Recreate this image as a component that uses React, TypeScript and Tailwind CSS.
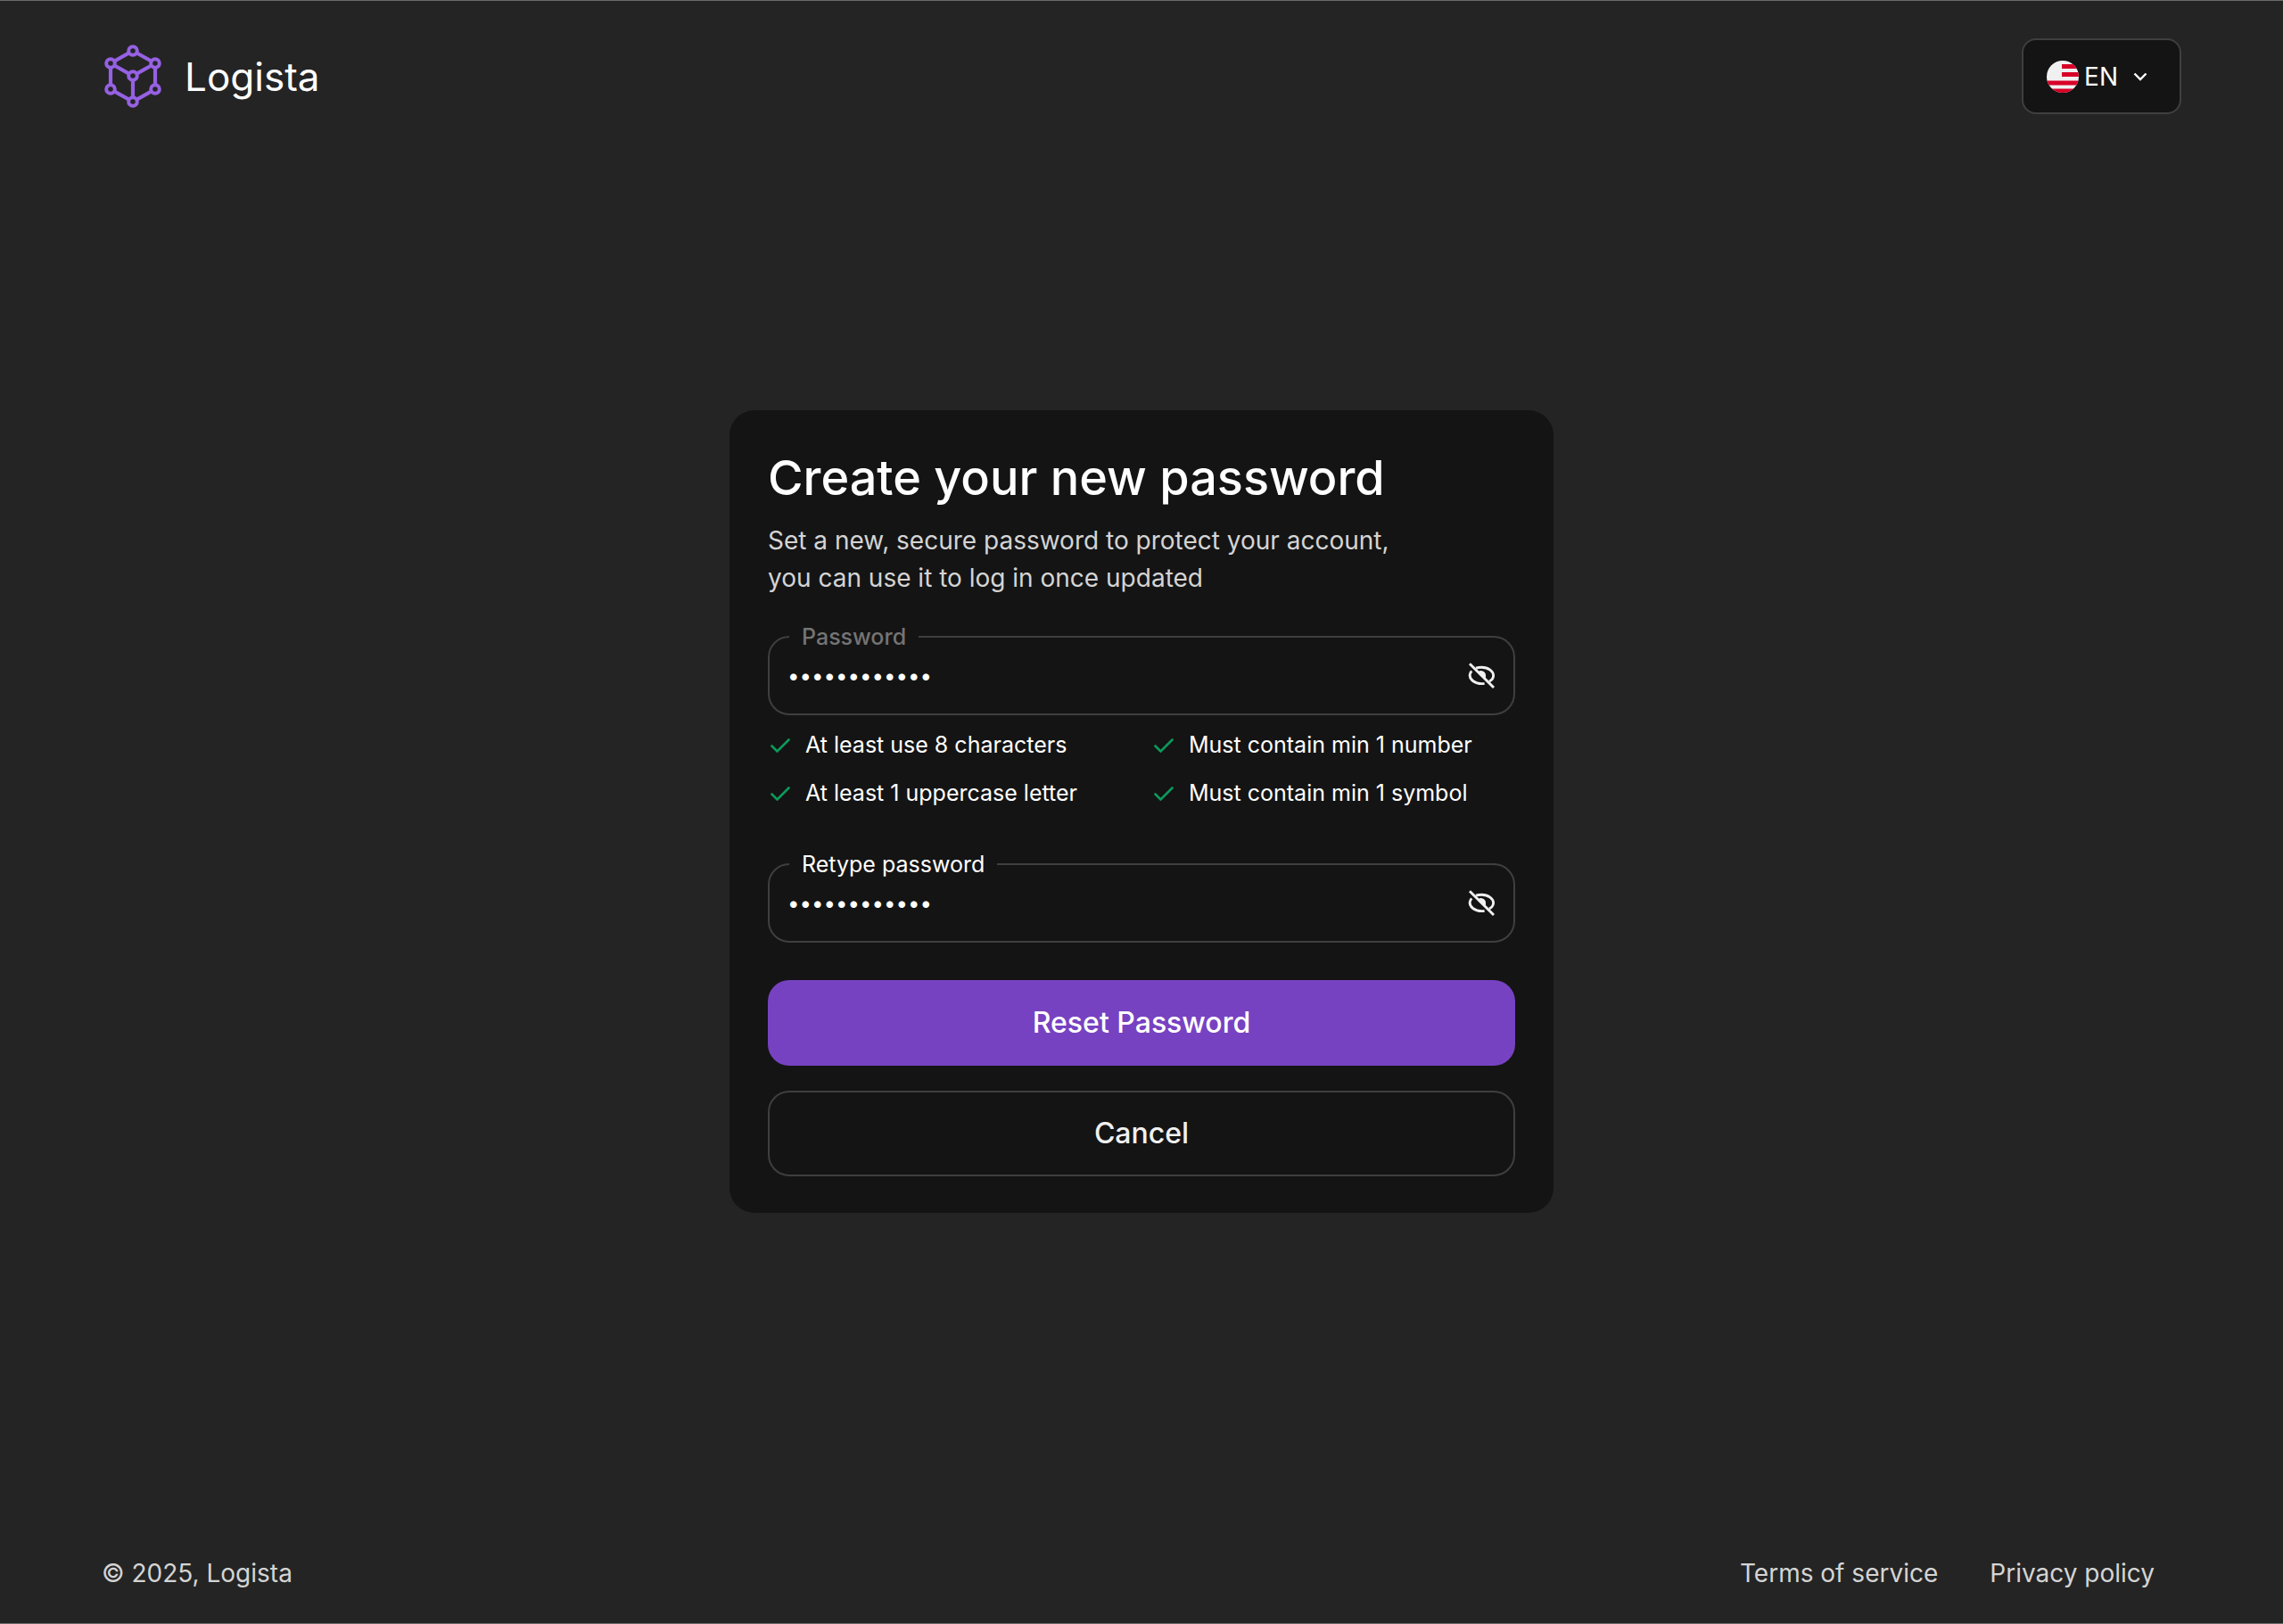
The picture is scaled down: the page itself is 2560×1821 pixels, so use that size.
import { useState } from "react";

function LogoMark() {
  const nodes = [
    [32, 7],
    [57, 21],
    [57, 50],
    [32, 64],
    [7, 50],
    [7, 21],
    [32, 35],
  ];
  return (
    <svg viewBox="0 0 64 71" className="h-[71px] w-16" aria-hidden="true">
      <path
        d="M32 7 57 21V50L32 64 7 50V21ZM7 21 32 35 57 21M32 35V64"
        fill="none"
        stroke="#9661e3"
        strokeWidth="4.200"
      />
      {nodes.map(([x, y]) => (
        <circle key={`${x}-${y}`} cx={x} cy={y} r="4.800" fill="#242424" stroke="#9661e3" strokeWidth="4" />
      ))}
    </svg>
  );
}

function Flag() {
  return (
    <svg viewBox="0 0 36 36" className="size-9" aria-hidden="true">
      <clipPath id="flag-disc">
        <circle cx="18" cy="18" r="18" />
      </clipPath>
      <g clipPath="url(#flag-disc)">
        <path d="M0 0h36v36H0z" fill="#f0f0f0" />
        <path d="M17 4h19v5H17zM17 13h19v5H17zM0 22.500h36v5H0zM0 31.500h36V36H0z" fill="#d80027" />
      </g>
    </svg>
  );
}

function EyeOff() {
  return (
    <svg viewBox="0 0 31 29" className="h-[29px] w-[31px]" aria-hidden="true" fill="none" stroke="#f0f0f0" strokeWidth="2.900">
      <path d="M9 6.200C11 5.500 13.200 5.200 15.400 5.200c7.600 0 13.200 4.600 13.200 9.200 0 2.600-1.700 5-4.600 6.700" />
      <path d="M4.200 9.400C2.800 11 2.100 12.700 2.100 14.300c0 4.800 5.700 9.300 13.300 9.300 1.100 0 2.200-.1 3.200-.3" />
      <path d="M11.500 10.300a5.200 5.200 0 0 1 8.500 4.200v4z" fill="#f0f0f0" stroke="none" />
      <path d="M2 1.200 29 28" />
    </svg>
  );
}

function PasswordField({ id, label, labelClass }: { id: string; label: string; labelClass: string }) {
  const [visible, setVisible] = useState(false);
  return (
    <div className="relative flex h-[89px] items-center rounded-3xl border-2 border-[#3f3f3f] px-5">
      <label
        htmlFor={id}
        className={`absolute -top-[15px] left-[22px] bg-[#141414] px-3.5 text-[25px] leading-7 ${labelClass}`}
      >
        {label}
      </label>
      <input
        id={id}
        type={visible ? "text" : "password"}
        defaultValue="Logista#2025"
        className="min-w-0 flex-1 bg-transparent text-2xl leading-9 text-white outline-none"
      />
      <button type="button" aria-label="Toggle password visibility" onClick={() => setVisible(!visible)}>
        <EyeOff />
      </button>
    </div>
  );
}

const rules = [
  "At least use 8 characters",
  "Must contain min 1 number",
  "At least 1 uppercase letter",
  "Must contain min 1 symbol",
];

export default function App() {
  return (
    <div className="flex min-h-screen flex-col border-y border-[#6a6a6a] bg-[#242424] font-['Inter',sans-serif] text-white">
      <header className="flex items-center justify-between px-[114px] pt-[42px]">
        <a href="#" className="flex items-center gap-[26px] pl-[3px]">
          <LogoMark />
          <span className="text-[44px] leading-[60px]">Logista</span>
        </a>
        <button
          type="button"
          className="flex h-[85px] items-center rounded-2xl border-2 border-[#3f3f3f] bg-[#141414] pr-9 pl-[26px]"
        >
          <Flag />
          <span className="ml-1.5 text-[28px] leading-9">EN</span>
          <svg viewBox="0 0 16 10" className="ml-[17px] h-2.5 w-4" aria-hidden="true">
            <path d="M1.500 1.500 8 8l6.500-6.500" fill="none" stroke="#fff" strokeWidth="2.400" />
          </svg>
        </button>
      </header>

      <main className="flex flex-1 items-center justify-center pb-[52px]">
        <form
          className="flex w-full max-w-[924px] flex-col rounded-[28px] bg-[#141414] px-[43px] py-[41px]"
          onSubmit={(e) => e.preventDefault()}
        >
          <h1 className="text-[54px] leading-[70px] font-medium">Create your new password</h1>
          <p className="mt-3.5 text-[28px] leading-[42px] text-[#d4d4d4]">
            Set a new, secure password to protect your account,
            <br />
            you can use it to log in once updated
          </p>
          <div className="mt-[44px]">
            <PasswordField id="password" label="Password" labelClass="font-medium text-[#747474]" />
          </div>
          <ul className="mt-3.5 grid grid-cols-[430px_1fr] gap-y-3.5">
            {rules.map((rule) => (
              <li key={rule} className="flex h-10 items-center gap-[17px] text-[25px]">
                <svg viewBox="0 0 22 16" className="ml-[3px] h-4 w-[22px]" aria-hidden="true">
                  <path d="M1.500 8.500 7.500 14.500 20.500 1.500" fill="none" stroke="#0b9a5b" strokeWidth="2.600" strokeLinecap="round" />
                </svg>
                {rule}
              </li>
            ))}
          </ul>
          <div className="mt-[58px]">
            <PasswordField id="retype" label="Retype password" labelClass="text-white" />
          </div>
          <button type="submit" className="mt-[42px] h-24 rounded-3xl bg-[#7742c2] text-[32px] font-medium">
            Reset Password
          </button>
          <button type="button" className="mt-7 h-24 rounded-3xl border-2 border-[#3f3f3f] text-[32px] font-medium text-[#f0f0f0]">
            Cancel
          </button>
        </form>
      </main>

      <footer className="flex items-center justify-between pr-36 pb-9 pl-[114px] text-[28px] leading-10 text-[#d4d4d4]">
        <p>© 2025, Logista</p>
        <nav className="flex gap-[58px]">
          <a href="#">Terms of service</a>
          <a href="#">Privacy policy</a>
        </nav>
      </footer>
    </div>
  );
}
